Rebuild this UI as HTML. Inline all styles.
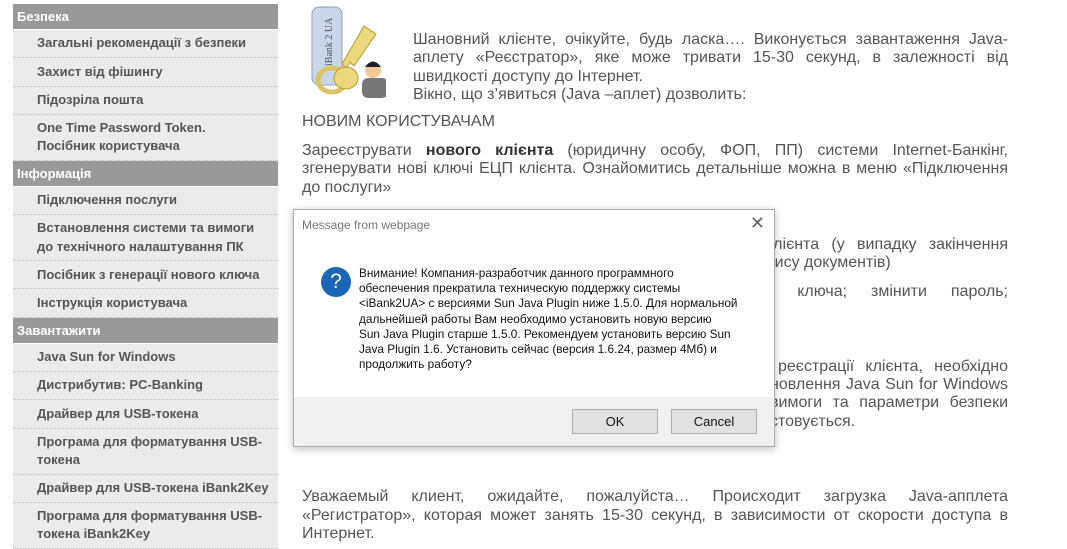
<!DOCTYPE html>
<html><head><meta charset="utf-8"><style>
*{margin:0;padding:0;box-sizing:border-box}
body{width:1067px;height:549px;overflow:hidden;background:#fff;position:relative;font-family:"Liberation Sans",Arial,sans-serif}
.sb{position:absolute;left:13px;top:4px;width:265px}
.h{background:#999;color:#fff;font-weight:bold;font-size:13px;height:26px;line-height:26px;padding-left:4px;border-bottom:1px solid #fff}
.i{background:#ebebeb;color:#555;font-weight:bold;font-size:13px;padding-left:24px;border-bottom:1px dotted #bbb;line-height:18.5px;display:flex;flex-direction:column;justify-content:center}
.s{height:28.3px}.d{height:46px}
.l{position:absolute;font-size:16px;color:#555;white-space:nowrap;line-height:18px;text-align:justify;text-align-last:justify}
.last{text-align-last:left}
.dlg{position:absolute;left:293px;top:209px;width:482px;height:238px;background:#fff;border:1px solid #aaa;box-shadow:0 2px 8px rgba(0,0,0,.25);font-family:"Liberation Sans",sans-serif}
.btn{position:absolute;top:199px;height:25px;width:86px;background:#e1e1e1;border:1px solid #adadad;font-size:13px;text-align:center;line-height:23px;color:#111}
</style></head><body>
<div class="sb">
<div class="h">Безпека</div>
<div class="i s">Загальні рекомендації з безпеки</div>
<div class="i s">Захист від фішингу</div>
<div class="i s">Підозріла пошта</div>
<div class="i d">One Time Password Token.<br>Посібник користувача</div>
<div class="h">Інформація</div>
<div class="i s">Підключення послуги</div>
<div class="i d">Встановлення системи та вимоги<br>до технічного налаштування ПК</div>
<div class="i s">Посібник з генерації нового ключа</div>
<div class="i s">Інструкція користувача</div>
<div class="h">Завантажити</div>
<div class="i s">Java Sun for Windows</div>
<div class="i s">Дистрибутив: PC-Banking</div>
<div class="i s">Драйвер для USB-токена</div>
<div class="i d">Програма для форматування USB-<br>токена</div>
<div class="i s">Драйвер для USB-токена iBank2Key</div>
<div class="i d">Програма для форматування USB-<br>токена iBank2Key</div>
</div>

<svg style="position:absolute;left:306px;top:4px" width="80" height="96" viewBox="0 0 80 96">
<rect x="6" y="3" width="30" height="78" rx="7" fill="#c9d6e8" stroke="#8fa2bd"/>
<text x="0" y="0" transform="translate(26,62) rotate(-90)" font-family="Liberation Serif" font-size="10" fill="#555">iBank 2 UA</text>
<path d="M58 22 L70 30 L48 62 L44 58 L40 64 L36 60 Z" fill="#ecd77a" stroke="#b99a30"/>
<ellipse cx="26" cy="76" rx="14" ry="12" fill="none" stroke="#d9c466" stroke-width="5"/>
<ellipse cx="40" cy="74" rx="12" ry="11" fill="#ecd77a" stroke="#b99a30"/>
<rect x="56" y="74" width="26" height="20" rx="6" fill="#777"/>
<circle cx="67" cy="66" r="8" fill="#f2c89b"/>
<path d="M59 63 Q67 52 75 63 Z" fill="#222"/>
</svg>

<div class="l" style="left:413px;top:31px;width:595px">Шановний клієнте, очікуйте, будь ласка…. Виконується завантаження Java-</div>
<div class="l" style="left:413px;top:49px;width:595px">аплету «Реєстратор», яке може тривати 15-30 секунд, в залежності від</div>
<div class="l last" style="left:413px;top:68px;width:595px">швидкості доступу до Інтернет.</div>
<div class="l last" style="left:413px;top:86px;width:595px">Вікно, що з’явиться (Java –аплет) дозволить:</div>
<div class="l last" style="left:302px;top:113px">НОВИМ КОРИСТУВАЧАМ</div>
<div class="l" style="left:302px;top:142px;width:706px">Зареєструвати <b style="color:#333">нового клієнта</b> (юридичну особу, ФОП, ПП) системи Internet-Банкінг,</div>
<div class="l" style="left:302px;top:160px;width:706px">згенерувати нові ключі ЕЦП клієнта. Ознайомитись детальніше можна в меню «Підключення</div>
<div class="l last" style="left:302px;top:179px">до послуги»</div>
<div class="l" style="left:766px;top:236px;width:242px">клієнта (у випадку закінчення</div>
<div class="l last" style="left:766px;top:254px">пису документів)</div>
<div class="l" style="left:766px;top:283px;width:242px">т ключа; змінити пароль;</div>
<div class="l" style="left:778px;top:358px;width:230px">реєстрації клієнта, необхідно</div>
<div class="l" style="left:770px;top:376px;width:238px">новлення Java Sun for Windows</div>
<div class="l" style="left:770px;top:394px;width:238px">вимоги та параметри безпеки</div>
<div class="l last" style="left:770px;top:413px">стовується.</div>
<div class="l" style="left:302px;top:488px;width:706px">Уважаемый клиент, ожидайте, пожалуйста… Происходит загрузка Java-апплета</div>
<div class="l" style="left:302px;top:507px;width:706px">«Регистратор», которая может занять 15-30 секунд, в зависимости от скорости доступа в</div>
<div class="l last" style="left:302px;top:525px">Интернет.</div>

<div class="dlg">
<div style="position:absolute;left:8px;top:8px;font-size:12px;color:#777">Message from webpage</div>
<div style="position:absolute;right:9px;top:3px;font-size:18px;color:#666;font-weight:200">✕</div>
<div style="position:absolute;left:27px;top:57px;width:30px;height:30px;border-radius:50%;background:#1a67b8;color:#fff;text-align:center;font-size:21px;line-height:30px">?</div>
<div style="position:absolute;left:65px;top:56px;font-size:11.8px;line-height:15.2px;color:#111;white-space:nowrap">Внимание! Компания-разработчик данного программного<br>обеспечения прекратила техническую поддержку системы<br>&lt;iBank2UA&gt; с версиями Sun Java Plugin ниже 1.5.0. Для нормальной<br>дальнейшей работы Вам необходимо установить новую версию<br>Sun Java Plugin старше 1.5.0. Рекомендуем установить версию Sun<br>Java Plugin 1.6. Установить сейчас (версия 1.6.24, размер 4Мб) и<br>продолжить работу?</div>
<div style="position:absolute;left:0;right:0;top:187px;bottom:0;background:#f0f0f0"></div>
<div class="btn" style="left:278px">OK</div>
<div class="btn" style="left:377px">Cancel</div>
</div>
</body></html>
